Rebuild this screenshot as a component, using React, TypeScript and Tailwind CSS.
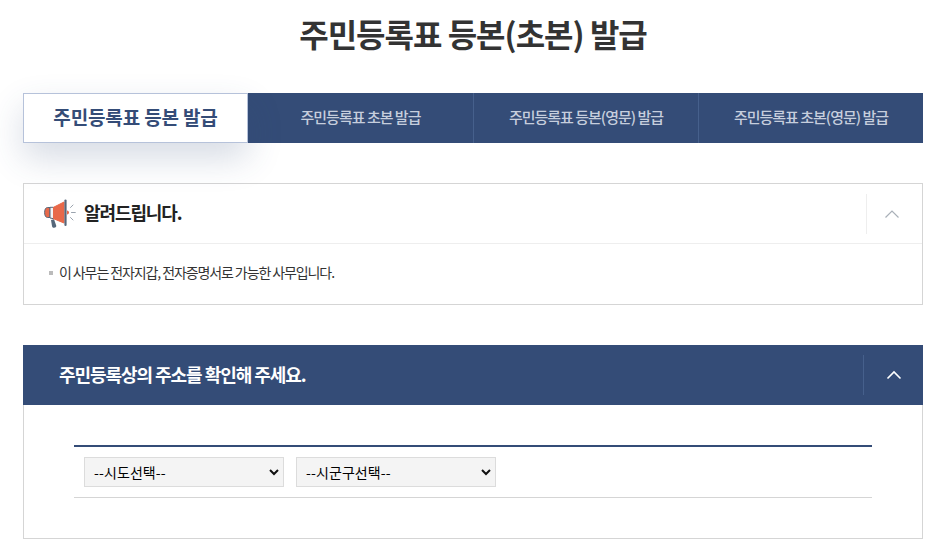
const font = { fontFamily: '"Noto Sans CJK KR", "Noto Sans", sans-serif' };

function Megaphone() {
  return (
    <svg width="32" height="29" viewBox="0 0 32 29" className="shrink-0">
      <path d="M7 21l3-.8 2.200 6.300c.3 1-.3 1.800-1.200 2.100l-.8.2c-1 .2-1.800-.3-2.100-1.200z" fill="#56677a" />
      <path d="M6 8.500H3.500C1.800 8.500.6 10.300.6 13.500s1.200 5 2.900 5H6z" fill="#e8694a" stroke="#56677a" strokeWidth="1" />
      <path d="M6 8.300h3.500v11.400l-3.500-.7z" fill="#f3f3f5" stroke="#56677a" strokeWidth="1" />
      <path d="M9.500 8.300L20 3v21l-10.500-4.300z" fill="#e8694a" stroke="#e8694a" strokeWidth="1" />
      <path d="M21.500 1.500v24.500" stroke="#56677a" strokeWidth="2.200" strokeLinecap="round" />
      <path d="M23 11.500c1.400.3 2 1 2 2s-.6 1.700-2 2z" fill="#e8694a" />
      <path d="M26.500 8.500l2.500-2.500M27.500 13.500h3.800M26.500 18.500l2.500 2.500" stroke="#9aa3ae" strokeWidth="1" strokeLinecap="round" />
    </svg>
  );
}

function Chevron({ color, width }: { color: string; width: number }) {
  return (
    <svg width="16" height="10" viewBox="0 0 16 10">
      <path d="M1.500 8.500L8 2l6.500 6.500" fill="none" stroke={color} strokeWidth={width} />
    </svg>
  );
}

function Select({ label }: { label: string }) {
  return (
    <div className="relative w-[200px] h-[30px]">
      <select
        style={font}
        className="appearance-none w-full h-full bg-[#f4f4f4] border border-[#dcdcdc] pl-[9px] text-[14px] tracking-[0.1px] text-black outline-none"
        defaultValue={label}
      >
        <option>{label}</option>
      </select>
      <svg width="10" height="7" viewBox="0 0 10 7" className="absolute right-[5px] top-[12px] pointer-events-none">
        <path d="M1 1l4 4 4-4" fill="none" stroke="#111" strokeWidth="2" />
      </svg>
    </div>
  );
}

export default function App() {
  const tabs = ['주민등록표 초본 발급', '주민등록표 등본(영문) 발급', '주민등록표 초본(영문) 발급'];
  return (
    <div style={font} className="w-[944px] h-[553px] overflow-hidden bg-white pl-[23px] pr-[21px]">
      <h1 className="h-[93px] pt-[8px] text-center text-[32px] leading-[50px] font-bold text-[#333] tracking-[-1px]">
        주민등록표 등본(초본) 발급
      </h1>

      <div className="flex h-[50px] w-[900px]">
        <div className="relative z-10 w-[225px] flex items-center justify-center pb-[1px] bg-white border border-[#b6c2da] text-[19px] font-bold text-[#344c77] tracking-[-0.15px] shadow-[0_15px_35px_rgba(52,76,119,0.2)]">
          주민등록표 등본 발급
        </div>
        {tabs.map((t, i) => (
          <div
            key={t}
            className={`w-[225px] flex items-center justify-center pb-[2px] bg-[#344c77] text-[15px] font-medium text-[#c6cedd] tracking-[-1px] ${i > 0 ? 'border-l border-[#46608c]' : ''}`}
          >
            {t}
          </div>
        ))}
      </div>

      <section className="mt-[40px] w-[900px] h-[122px] border border-[#d5d5d5]">
        <div className="h-[60px] flex items-center border-b border-[#eeeeee] pl-[20px]">
          <Megaphone />
          <div className="ml-[8px] pb-[2px] text-[18px] font-bold text-[#222] tracking-[-1.1px]">알려드립니다.</div>
          <div className="ml-auto flex items-center self-start mt-[10px] h-[40px] w-[56px] border-l border-[#eeeeee] pl-[17px]">
            <Chevron color="#a9b0b8" width={1.2} />
          </div>
        </div>
        <div className="flex items-center pl-[25px] pt-[18px] text-[14px] text-[#333] tracking-[-1.1px] leading-[20px]">
          <span className="w-[4px] h-[4px] bg-[#bbbbbb] mr-[6px] mt-[1px]" />
          이 사무는 전자지갑, 전자증명서로 가능한 사무입니다.
        </div>
      </section>

      <section className="mt-[40px] w-[900px] h-[194px] border border-[#d5d5d5] border-t-0">
        <div className="-mx-px h-[60px] bg-[#344c77] flex items-center pl-[36px]">
          <div className="pb-[2px] text-[18px] font-bold text-white tracking-[-1.05px]">주민등록상의 주소를 확인해 주세요.</div>
          <div className="ml-auto flex items-center h-[40px] w-[60px] border-l border-[#46608c] pl-[22px]">
            <Chevron color="#ffffff" width={1.6} />
          </div>
        </div>
        <div className="mx-[50px] mt-[40px] h-[53px] border-t-2 border-b border-t-[#344c77] border-b-[#d5d5d5] flex items-center gap-[12px] pl-[10px]">
          <Select label="--시도선택--" />
          <Select label="--시군구선택--" />
        </div>
      </section>
    </div>
  );
}
